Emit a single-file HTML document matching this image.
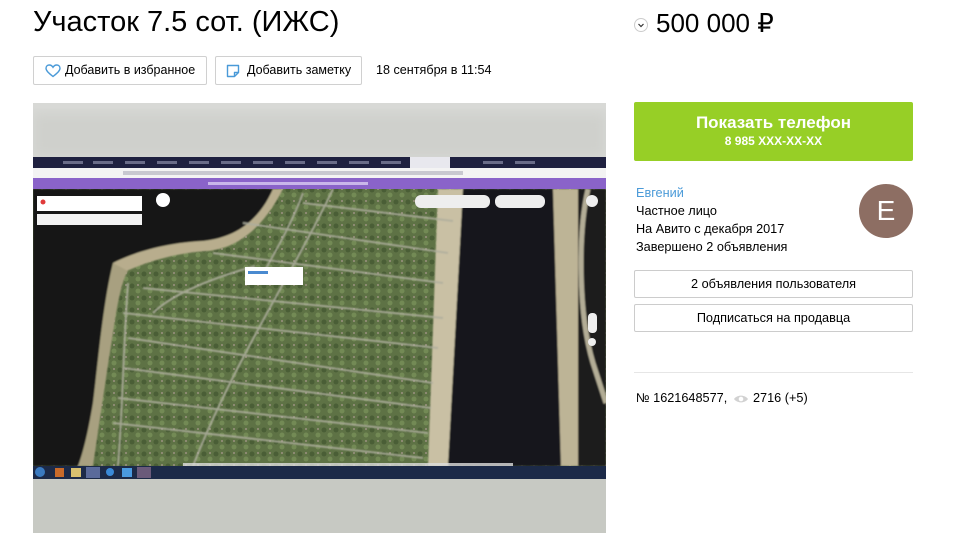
<!DOCTYPE html>
<html><head><meta charset="utf-8"><style>
*{margin:0;padding:0;box-sizing:border-box}
body{width:968px;height:548px;background:#fff;font-family:"Liberation Sans",Arial,sans-serif;color:#000;position:relative;overflow:hidden}
.a{position:absolute}
h1{position:absolute;left:33px;top:6px;font-size:29px;font-weight:normal;letter-spacing:0}
.btn{position:absolute;height:29px;border:1px solid #d0d0d0;border-radius:2px;font-size:12.5px;line-height:27px;background:#fff}
.side{font-size:12.7px;line-height:18px}
.sb{position:absolute;left:634px;width:279px;height:28px;border:1px solid #ccc;border-radius:2px;text-align:center;font-size:12.7px;line-height:26px}
</style></head><body>
<h1>Участок 7.5 сот. (ИЖС)</h1>
<div class="a" style="left:634px;top:18px;width:14px;height:14px;border:1px solid #ccc;border-radius:50%"></div>
<svg class="a" style="left:636px;top:20px" width="10" height="10"><path d="M2.5 4 L5 6.5 L7.5 4" stroke="#333" stroke-width="1.2" fill="none"/></svg>
<div class="a" style="left:656px;top:8px;font-size:26px">500 000 ₽</div>

<div class="btn" style="left:33px;top:56px;width:174px"><svg class="a" style="left:11px;top:7px" width="16" height="14"><path d="M8 12.5 C3 8.5 1 6.5 1 4.3 C1 2.3 2.5 1 4.3 1 C5.8 1 7.2 2 8 3.3 C8.8 2 10.2 1 11.7 1 C13.5 1 15 2.3 15 4.3 C15 6.5 13 8.5 8 12.5Z" stroke="#4a9ad8" stroke-width="1.4" fill="none"/></svg><span class="a" style="left:31px">Добавить в избранное</span></div>
<div class="btn" style="left:215px;top:56px;width:147px"><svg class="a" style="left:10px;top:7px" width="14" height="14"><path d="M1.5 1.5 H12.5 V8.5 L8.5 12.5 H1.5Z M8.5 12.5 V8.5 H12.5" stroke="#4a9ad8" stroke-width="1.4" fill="none" stroke-linejoin="round"/></svg><span class="a" style="left:31px">Добавить заметку</span></div>
<div class="a" style="left:376px;top:63px;font-size:12.6px">18 сентября в 11:54</div>

<svg class="a" style="left:33px;top:103px" width="573" height="430" viewBox="0 0 573 430">
<defs>
<filter id="b"><feGaussianBlur stdDeviation="6"/></filter>
<filter id="s"><feGaussianBlur stdDeviation="0.8"/></filter>
<pattern id="g" width="12" height="12" patternUnits="userSpaceOnUse"><rect width="12" height="12" fill="#5e7245"/><circle cx="3" cy="3" r="2.5" fill="#4a5e36"/><circle cx="9" cy="8" r="2.5" fill="#738a55"/><circle cx="9" cy="2" r="1" fill="#9a9280"/></pattern>
</defs>
<rect width="573" height="430" fill="#d8d9d6"/>
<rect x="0" y="10" width="573" height="44" fill="#cfd0cc" filter="url(#b)"/>
<rect x="0" y="376" width="573" height="54" fill="#c7c9c3"/>
<rect x="0" y="86" width="573" height="277" fill="url(#g)"/>
<g filter="url(#s)">
<path d="M0 86 H240 C225 120 200 135 170 138 C130 140 100 150 80 160 C70 200 65 260 60 300 C55 330 50 350 45 363 H0Z" fill="#121417"/>
<path d="M240 86 C225 120 200 135 170 138 C130 140 100 150 80 160 L85 172 C110 160 140 150 175 148 C205 145 230 125 250 86Z" fill="#b8ad8d"/>
<path d="M80 160 C70 200 65 260 60 300 C55 330 50 350 45 363 H60 C65 330 72 280 80 230 C85 195 90 175 95 168Z" fill="#a8a080"/>
<path d="M405 86 H430 L415 363 H395Z" fill="#c9c0a4"/>
<path d="M430 86 H573 V363 H415Z" fill="#14171a"/>
<path d="M520 86 H545 V363 H528Z" fill="#bdb496"/>
<path d="M545 86 H573 V363 H545Z" fill="#1a1d1f"/>
<path d="M555 86 C545 130 545 210 560 260 L573 300" stroke="#b3ad96" stroke-width="5" fill="none"/>
<g stroke="#aeae9e" stroke-width="2" fill="none" opacity=".85">
<path d="M90 210 L405 245"/><path d="M95 235 L400 280"/><path d="M90 265 L398 305"/><path d="M85 295 L395 330"/><path d="M80 320 L390 355"/><path d="M110 185 L410 215"/><path d="M180 150 L410 180"/><path d="M210 120 L415 150"/><path d="M270 100 L420 118"/>
<path d="M300 86 C260 170 200 260 160 363"/><path d="M222 163 C180 175 140 190 120 210"/><path d="M95 180 C90 250 90 300 85 363"/><path d="M270 90 C255 130 235 160 228 175"/>
</g>
</g>
<rect x="0" y="54" width="573" height="11" fill="#1f2140"/>
<g fill="#6a6c88"><rect x="30" y="58" width="20" height="3"/><rect x="60" y="58" width="20" height="3"/><rect x="92" y="58" width="20" height="3"/><rect x="124" y="58" width="20" height="3"/><rect x="156" y="58" width="20" height="3"/><rect x="188" y="58" width="20" height="3"/><rect x="220" y="58" width="20" height="3"/><rect x="252" y="58" width="20" height="3"/><rect x="284" y="58" width="20" height="3"/><rect x="316" y="58" width="20" height="3"/><rect x="348" y="58" width="20" height="3"/><rect x="450" y="58" width="20" height="3"/><rect x="482" y="58" width="20" height="3"/></g>
<rect x="377" y="54" width="40" height="11" fill="#e8e8ee"/>
<rect x="0" y="65" width="573" height="10" fill="#f3f3f3"/>
<rect x="90" y="68" width="340" height="4" fill="#c8c8d0"/>
<rect x="0" y="75" width="573" height="11" fill="#8a63c9"/>
<rect x="175" y="79" width="160" height="3" fill="#c9b6ea"/>
<rect x="4" y="93" width="105" height="15" fill="#fff"/>
<rect x="4" y="111" width="105" height="11" fill="#f2f2f2"/>
<circle cx="10" cy="99" r="2.5" fill="#e03a3a"/>
<circle cx="130" cy="97" r="7" fill="#fff"/>
<rect x="212" y="164" width="58" height="18" fill="#fff"/>
<rect x="215" y="168" width="20" height="3" fill="#4a8ad0"/>
<rect x="382" y="92" width="75" height="13" rx="6" fill="#eee"/>
<rect x="462" y="92" width="50" height="13" rx="6" fill="#eee"/>
<circle cx="559" cy="98" r="6" fill="#eee"/>
<rect x="555" y="210" width="9" height="20" rx="4" fill="#eee"/>
<circle cx="559" cy="239" r="4" fill="#eee"/>
<rect x="150" y="360" width="330" height="4" fill="#ddd" opacity=".8"/>
<rect x="0" y="363" width="573" height="13" fill="#1c2a48"/>
<circle cx="7" cy="369" r="5" fill="#3a7ac0"/>
<rect x="22" y="365" width="9" height="9" fill="#c86a2a"/>
<rect x="38" y="365" width="10" height="9" fill="#d8c070"/>
<rect x="53" y="364" width="14" height="11" fill="#5a6a9a"/>
<circle cx="77" cy="369" r="4" fill="#3a8ad8"/>
<rect x="89" y="365" width="10" height="9" fill="#4a9ae0"/>
<rect x="104" y="364" width="14" height="11" fill="#6a5a7a"/>
</svg>

<div class="a" style="left:634px;top:102px;width:279px;height:59px;background:#97cf26;border-radius:2px;color:#fff;text-align:center">
<div style="font-size:17px;font-weight:bold;margin-top:11px;line-height:20px">Показать телефон</div>
<div style="font-size:12px;font-weight:bold;line-height:16px">8 985 XXX-XX-XX</div></div>
<div class="a side" style="left:636px;top:184px"><div style="color:#4a9ad8">Евгений</div><div>Частное лицо</div><div>На Авито с декабря 2017</div><div>Завершено 2 объявления</div></div>
<div class="a" style="left:859px;top:184px;width:54px;height:54px;border-radius:50%;background:#8d6e63;color:#fff;font-size:28px;text-align:center;line-height:54px">E</div>
<div class="sb" style="top:270px">2 объявления пользователя</div>
<div class="sb" style="top:304px">Подписаться на продавца</div>
<div class="a" style="left:634px;top:372px;width:279px;height:1px;background:#e6e6e6"></div>
<div class="a" style="left:636px;top:391px;font-size:12.7px">№ 1621648577,</div>
<svg class="a" style="left:733px;top:393px" width="16" height="12"><path d="M1 6 C4 1.5 12 1.5 15 6 C12 10.5 4 10.5 1 6Z" fill="#d2d2d2"/><circle cx="8" cy="6" r="2.3" fill="#fff"/></svg>
<div class="a" style="left:753px;top:391px;font-size:12.7px">2716 (+5)</div>
</body></html>
